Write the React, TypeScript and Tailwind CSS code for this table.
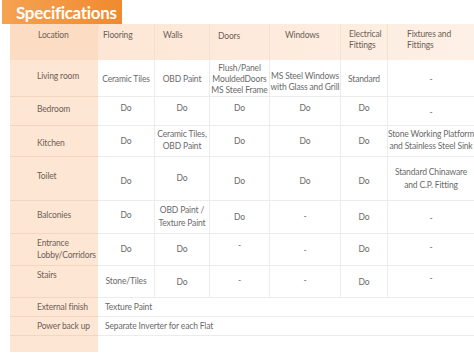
const cell = 'flex flex-col items-center text-center border-r border-b border-[#ececec] leading-[11px]';
const loc = 'flex flex-col items-start border-b border-[#f3d6bf] pl-[27px] text-[#6e5f57] leading-[12px]';

type Cell = { t: string[]; c: string };
type Row = { h: string; loc: Cell; cells: Cell[] };

const rows: Row[] = [
    {
        h: 'h-[37px]',
        loc: { t: ['Living room'], c: 'pt-[10px]' },
        cells: [
            { t: ['Ceramic Tiles'], c: 'pt-[14px]' },
            { t: ['OBD Paint'], c: 'pt-[14px]' },
            { t: ['Flush/Panel', 'MouldedDoors', 'MS Steel Frame'], c: 'pt-[3px]' },
            { t: ['MS Steel Windows', 'with Glass and Grill'], c: 'pt-[11px] leading-[10px]' },
            { t: ['Standard'], c: 'pt-[14px]' },
            { t: ['-'], c: 'pt-[14px]' },
        ],
    },
    {
        h: 'h-[29px]',
        loc: { t: ['Bedroom'], c: 'pt-[6px]' },
        cells: [
            { t: ['Do'], c: 'pt-[6px]' },
            { t: ['Do'], c: 'pt-[6px]' },
            { t: ['Do'], c: 'pt-[6px]' },
            { t: ['Do'], c: 'pt-[6px]' },
            { t: ['Do'], c: 'pt-[6px]' },
            { t: ['-'], c: 'pt-[10px]' },
        ],
    },
    {
        h: 'h-[31px]',
        loc: { t: ['Kitchen'], c: 'pt-[11px]' },
        cells: [
            { t: ['Do'], c: 'pt-[10px]' },
            { t: ['Ceramic Tiles,', 'OBD Paint'], c: 'pt-[2px] leading-[12px]' },
            { t: ['Do'], c: 'pt-[10px]' },
            { t: ['Do'], c: 'pt-[10px]' },
            { t: ['Do'], c: 'pt-[10px]' },
            { t: ['Stone Working Platform', 'and Stainless Steel Sink'], c: 'pt-[2px] leading-[12px]' },
        ],
    },
    {
        h: 'h-[44px]',
        loc: { t: ['Toilet'], c: 'pt-[13px]' },
        cells: [
            { t: ['Do'], c: 'pt-[19px]' },
            { t: ['Do'], c: 'pt-[16px]' },
            { t: ['Do'], c: 'pt-[19px]' },
            { t: ['Do'], c: 'pt-[19px]' },
            { t: ['Do'], c: 'pt-[19px]' },
            { t: ['Standard Chinaware', 'and C.P. Fitting'], c: 'pt-[9px] leading-[13px]' },
        ],
    },
    {
        h: 'h-[33px]',
        loc: { t: ['Balconies'], c: 'pt-[8px]' },
        cells: [
            { t: ['Do'], c: 'pt-[9px]' },
            { t: ['OBD Paint /', 'Texture Paint'], c: 'pt-[3px] leading-[13px]' },
            { t: ['Do'], c: 'pt-[11px]' },
            { t: ['-'], c: 'pt-[10px]' },
            { t: ['Do'], c: 'pt-[11px]' },
            { t: ['-'], c: 'pt-[12px]' },
        ],
    },
    {
        h: 'h-[32px]',
        loc: { t: ['Entrance', 'Lobby/Corridors'], c: 'pt-[3px] pl-[25px]' },
        cells: [
            { t: ['Do'], c: 'pt-[10px]' },
            { t: ['Do'], c: 'pt-[10px]' },
            { t: ['-'], c: 'pt-[6px]' },
            { t: ['-'], c: 'pt-[11px]' },
            { t: ['Do'], c: 'pt-[10px]' },
            { t: ['-'], c: 'pt-[8px]' },
        ],
    },
    {
        h: 'h-[32px]',
        loc: { t: ['Stairs'], c: 'pt-[3px]' },
        cells: [
            { t: ['Stone/Tiles'], c: 'pt-[10px]' },
            { t: ['Do'], c: 'pt-[11px]' },
            { t: ['-'], c: 'pt-[9px]' },
            { t: ['-'], c: 'pt-[9px]' },
            { t: ['Do'], c: 'pt-[11px]' },
            { t: ['-'], c: 'pt-[7px]' },
        ],
    },
];

export default function App() {
    return (
        <div className="h-[353px] w-[474px] overflow-hidden bg-white font-['Lato',sans-serif] text-[8.5px] tracking-[-0.15px] text-[#6a6a6a]">
            <div className="ml-[2px] flex h-[24px] w-[120px] items-center bg-gradient-to-r from-[#f5a251] to-[#f08a2e] pl-[14px]">
                <span className="text-[17px] leading-none font-bold tracking-[-0.3px] text-white">Specifications</span>
            </div>
            <div className="ml-[10px] grid w-[464px] grid-cols-[88px_57px_55px_60px_71px_47px_86px]">
                <div className="h-[36px] bg-[#fcdcc3] pt-[6px] pl-[28px] leading-[11px] text-[#6e5f57]">Location</div>
                <div className="col-span-6 grid grid-cols-[57px_55px_60px_71px_47px_86px] bg-gradient-to-r from-[#fde6d5] to-[#fdf0e6] leading-[11px] text-[#6e5f57]">
                    <div className="border-r border-[#f6e0cf] pt-[6px] pl-[5px]">Flooring</div>
                    <div className="border-r border-[#f6e0cf] pt-[6px] pl-[8px]">Walls</div>
                    <div className="border-r border-[#f6e0cf] pt-[7px] pl-[8px]">Doors</div>
                    <div className="border-r border-[#f6e0cf] pt-[6px] pl-[15px]">Windows</div>
                    <div className="border-r border-[#f6e0cf] pt-[5px] pl-[8px]">
                        <div>Electrical</div>
                        <div>Fittings</div>
                    </div>
                    <div className="mr-[2px] pt-[5px] pl-[19px]">
                        <div>Fixtures and</div>
                        <div>Fittings</div>
                    </div>
                </div>

                {rows.map((row, i) => (
                    <div key={i} className={`col-span-7 grid grid-cols-[88px_57px_55px_60px_71px_47px_86px] ${row.h}`}>
                        <div className={`bg-[#fde6d4] ${loc} ${row.loc.c}`}>
                            {row.loc.t.map((l) => (
                                <div key={l} className="whitespace-nowrap">{l}</div>
                            ))}
                        </div>
                        {row.cells.map((c, j) => (
                            <div key={j} className={`${cell} ${c.c} ${j === 5 ? 'border-r-0' : ''}`}>
                                {c.t.map((l) => (
                                    <div key={l} className="whitespace-nowrap">{l}</div>
                                ))}
                            </div>
                        ))}
                    </div>
                ))}

                <div className={`h-[19px] bg-[#fde6d4] ${loc} pt-[3px]`}>External finish</div>
                <div className="col-span-6 h-[19px] border-b border-[#ececec] pt-[4px] pl-[7px] leading-[11px]">Texture Paint</div>
                <div className={`h-[19px] bg-[#fde6d4] ${loc} pt-[3px]`}>Power back up</div>
                <div className="col-span-6 h-[19px] border-b border-[#ececec] pt-[4px] pl-[7px] leading-[11px]">Separate Inverter for each Flat</div>
                <div className="h-[16px] bg-[#fde6d4]"></div>
                <div className="col-span-6 h-[16px]"></div>
            </div>
        </div>
    );
}
